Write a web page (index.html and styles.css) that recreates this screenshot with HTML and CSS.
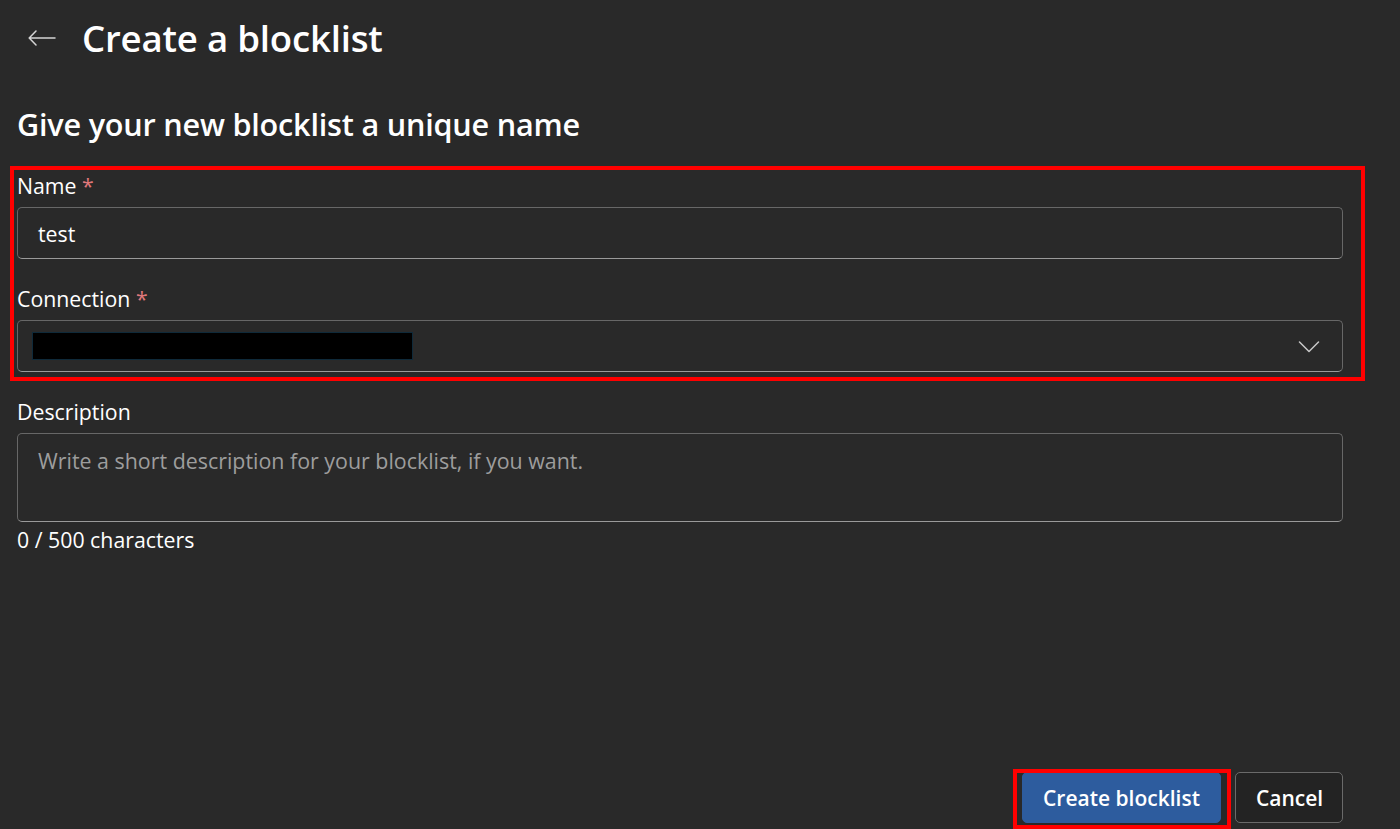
FILE: index.html
```html
<!DOCTYPE html>
<html lang="en">
<head>
<meta charset="utf-8">
<title>Create a blocklist</title>
<link rel="stylesheet" href="styles.css">
</head>
<body>
<div class="page">
  <header class="header">
    <button class="back" aria-label="Back">
      <svg width="28" height="16" viewBox="0 0 28 16" fill="none" stroke="#d4d4d4" stroke-width="1.5" stroke-linecap="round" stroke-linejoin="round"><path d="M27 8H1.5M8 1L1.2 8L8 15"/></svg>
    </button>
    <h1 class="title">Create a blocklist</h1>
  </header>

  <h2 class="subtitle">Give your new blocklist a unique name</h2>

  <div class="form">
    <div class="group highlight">
      <div class="field">
        <label class="label">Name <span class="req">*</span></label>
        <div class="input"><span class="value">test</span></div>
      </div>
      <div class="field">
        <label class="label">Connection <span class="req">*</span></label>
        <div class="input select">
          <span class="redact"></span>
          <svg class="chev" width="22" height="12" viewBox="0 0 22 12" fill="none" stroke="#c8c8c8" stroke-width="1.5" stroke-linecap="round" stroke-linejoin="round"><path d="M1.5 1L11 10.5L20.5 1"/></svg>
        </div>
      </div>
    </div>
    <div class="field">
      <label class="label">Description</label>
      <div class="textarea"><span class="placeholder">Write a short description for your blocklist, if you want.</span></div>
      <div class="counter">0 / 500 characters</div>
    </div>
  </div>

  <div class="spacer"></div>

  <footer class="actions">
    <button class="btn primary highlight-btn">Create blocklist</button>
    <button class="btn secondary">Cancel</button>
  </footer>
</div>
</body>
</html>
```

FILE: styles.css
```css
* { box-sizing: border-box; }
html, body { margin: 0; padding: 0; }
body {
  background: #292929;
  color: #ffffff;
  font-family: "Open Sans", "Noto Sans", "Liberation Sans", sans-serif;
  overflow: hidden;
}
.page {
  height: 829px;
  width: 1400px;
  padding: 0 57px 6px 17px;
  display: flex;
  flex-direction: column;
}
.header {
  height: 76px;
  display: flex;
  align-items: center;
  gap: 26px;
  padding-left: 11px;
}
.back {
  background: none;
  border: 0;
  padding: 0;
  width: 28px;
  height: 16px;
  display: flex;
  cursor: pointer;
}
.title {
  margin: 0;
  font-size: 36.6px;
  font-weight: 600;
  line-height: 48px;
  letter-spacing: -0.2px;
}
.subtitle {
  margin: 28px 0 0;
  font-size: 30.6px;
  font-weight: 600;
  line-height: 40px;
  letter-spacing: -0.2px;
}
.form {
  width: 1326px;
  margin-top: 28px;
  display: flex;
  flex-direction: column;
  gap: 26px;
}
.group {
  display: flex;
  flex-direction: column;
  gap: 26px;
}
.highlight { position: relative; }
.highlight::after {
  content: "";
  position: absolute;
  left: -7px;
  right: -22px;
  top: -6px;
  bottom: -9px;
  border: 4px solid #ff0000;
  pointer-events: none;
}
.field { display: flex; flex-direction: column; }
.label {
  font-size: 21.3px;
  line-height: 28px;
  margin-bottom: 7px;
  color: #ffffff;
}
.req { color: #e0787b; }
.input {
  height: 52px;
  border: 1px solid #676767;
  border-bottom-color: #9a9a9a;
  border-radius: 5px;
  display: flex;
  align-items: center;
  padding: 0 20px;
}
.value { font-size: 21.3px; }
.select { padding: 0 22px 0 14px; justify-content: space-between; }
.redact {
  width: 381px;
  height: 28px;
  background: #000;
  border: 1px solid #0f2a3a;
}
.chev { margin-top: 2px; }
.textarea {
  height: 89px;
  border: 1px solid #676767;
  border-bottom-color: #9a9a9a;
  border-radius: 5px;
  padding: 13px 20px;
}
.placeholder {
  font-size: 21.4px;
  line-height: 28px;
  color: #9d9d9d;
}
.counter {
  margin-top: 4px;
  font-size: 21.3px;
  line-height: 28px;
}
.spacer { flex: 1; }
.actions {
  display: flex;
  justify-content: flex-end;
  gap: 14px;
  width: 1326px;
}
.btn {
  height: 51px;
  border-radius: 5px;
  font-family: inherit;
  font-size: 21px;
  font-weight: 600;
  color: #ffffff;
  padding: 0 20px;
}
.primary {
  background: #2d5c9e;
  border: 1px solid #2d5c9e;
  width: 199px;
}
.secondary {
  background: #232323;
  border: 1px solid #6a6a6a;
  width: 108px;
}
.highlight-btn { position: relative; }
.highlight-btn::after {
  content: "";
  position: absolute;
  left: -10px;
  right: -11px;
  top: -4px;
  bottom: -7px;
  border: 4px solid #ff0000;
  pointer-events: none;
}
```
